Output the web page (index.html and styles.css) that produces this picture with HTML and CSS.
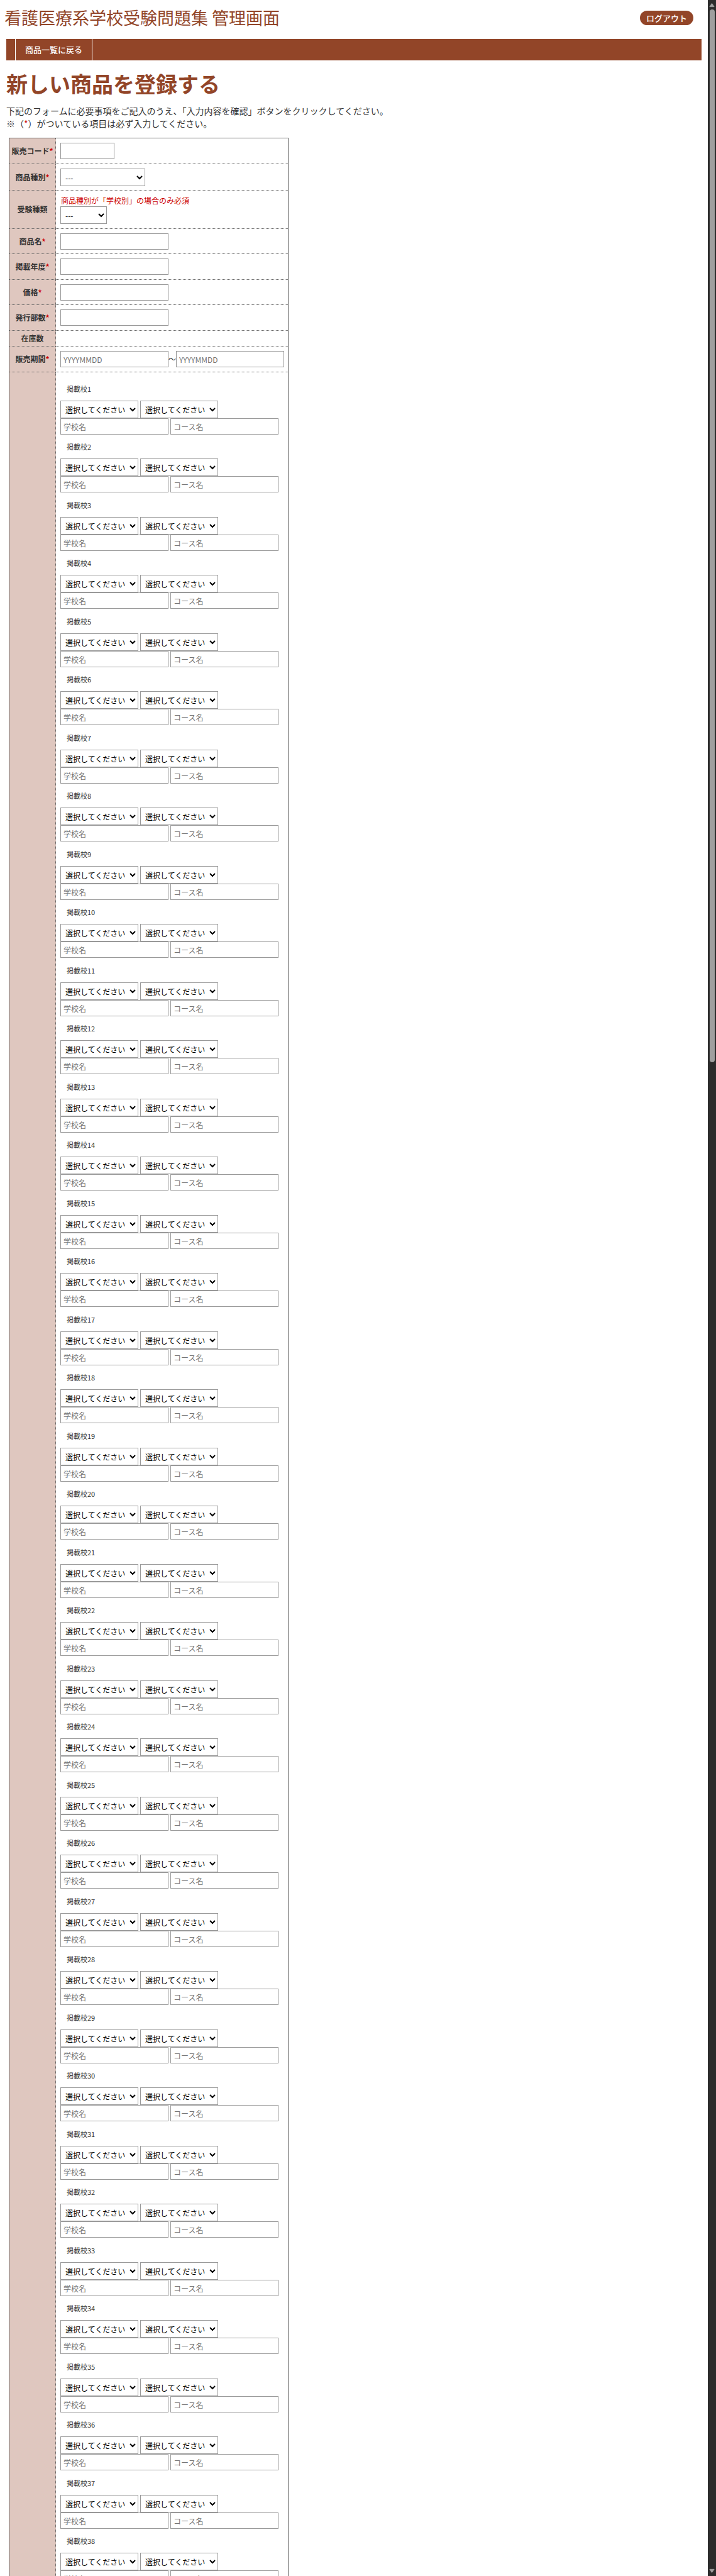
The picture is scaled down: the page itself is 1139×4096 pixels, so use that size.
FILE: index.html
```html
<!DOCTYPE html>
<html lang="ja">
<head>
<meta charset="utf-8">
<meta name="viewport" content="width=device-width, initial-scale=1">
<title>看護医療系学校受験問題集 管理画面</title>
<link rel="stylesheet" href="styles.css">
</head>
<body>
<div class="page">
  <header class="header">
    <p class="site-title">看護医療系学校受験問題集 管理画面</p>
    <button class="logout" type="button">ログアウト</button>
  </header>
  <nav class="nav">
    <a class="nav-link" href="#">商品一覧に戻る</a>
  </nav>
  <main class="main">
    <h1 class="heading">新しい商品を登録する</h1>
    <p class="intro">下記のフォームに必要事項をご記入のうえ、「入力内容を確認」ボタンをクリックしてください。<br>※（<span class="req">*</span>）がついている項目は必ず入力してください。</p>
    <form>
      <table class="form-table">
        <tbody>
          <tr>
            <th scope="row"><label for="code">販売コード<span class="req">*</span></label></th>
            <td><div class="line"><input class="text short" id="code" type="text"></div></td>
          </tr>
          <tr>
            <th scope="row"><label for="kind">商品種別<span class="req">*</span></label></th>
            <td><div class="line"><select class="select wide" id="kind"><option>---</option></select></div></td>
          </tr>
          <tr>
            <th scope="row"><label for="exam">受験種類</label></th>
            <td>
              <p class="note">商品種別が「学校別」の場合のみ必須</p>
              <div class="line"><select class="select narrow" id="exam"><option>---</option></select></div>
            </td>
          </tr>
          <tr>
            <th scope="row"><label for="name">商品名<span class="req">*</span></label></th>
            <td><div class="line"><input class="text" id="name" type="text"></div></td>
          </tr>
          <tr>
            <th scope="row"><label for="year">掲載年度<span class="req">*</span></label></th>
            <td><div class="line"><input class="text" id="year" type="text"></div></td>
          </tr>
          <tr>
            <th scope="row"><label for="price">価格<span class="req">*</span></label></th>
            <td><div class="line"><input class="text" id="price" type="text"></div></td>
          </tr>
          <tr>
            <th scope="row"><label for="copies">発行部数<span class="req">*</span></label></th>
            <td><div class="line"><input class="text" id="copies" type="text"></div></td>
          </tr>
          <tr class="stock">
            <th scope="row">在庫数</th>
            <td></td>
          </tr>
          <tr>
            <th scope="row"><label for="from">販売期間<span class="req">*</span></label></th>
            <td><div class="line period"><input class="text" id="from" type="text" placeholder="YYYYMMDD"><span class="tilde">～</span><input class="text" type="text" placeholder="YYYYMMDD" aria-label="販売期間の終了日"></div></td>
          </tr>
          <tr>
            <th></th>
            <td id="schools"></td>
          </tr>
        </tbody>
      </table>
    </form>
  </main>
</div>
<div class="scrollbar" aria-hidden="true">
  <svg class="arrow" viewBox="0 0 10 8"><path d="M5 1 9 7H1Z" fill="#9f9f9f" stroke="#9f9f9f" stroke-linejoin="round"/></svg>
  <div class="track"><div class="thumb"></div></div>
  <svg class="arrow" viewBox="0 0 10 8"><path d="M5 7 1 1H9Z" fill="#9f9f9f" stroke="#9f9f9f" stroke-linejoin="round"/></svg>
</div>
<script src="schools.js"></script>
</body>
</html>
```
FILE: styles.css
```css
* {
  box-sizing: border-box;
}

body {
  display: flex;
  height: 100vh;
  margin: 0;
  overflow: hidden;
  background: #fff;
  color: #333;
  font-family: "Noto Sans CJK JP", sans-serif;
  font-size: 12px;
  line-height: 18px;
}

p, h1 {
  margin: 0;
}

button, input, select {
  margin: 0;
  font-family: inherit;
  font-size: 12px;
}

.page {
  flex: 1;
  min-width: 0;
  overflow: hidden;
}

.header {
  display: flex;
  justify-content: space-between;
  align-items: center;
  padding: 8px 23px 14px 7px;
}

.site-title {
  color: #924528;
  font-size: 27px;
  line-height: 40px;
}

.logout {
  padding: 0 10px;
  border: 0;
  border-radius: 12px;
  background: #924528;
  color: #fff;
  font-size: 13px;
  font-weight: 500;
  line-height: 23px;
}

.nav {
  display: flex;
  margin: 0 10px;
  padding-left: 14px;
  background: #924528;
}

.nav-link {
  padding: 0 15px;
  border: solid #fff;
  border-width: 0 1px;
  color: #fff;
  font-size: 13px;
  font-weight: 500;
  line-height: 34px;
  text-decoration: none;
}

.main {
  padding: 13px 10px 0;
}

.heading {
  color: #924528;
  font-size: 34px;
  font-weight: 700;
  line-height: 48px;
}

.intro {
  margin: 9px 0 13px;
  font-size: 14px;
  line-height: 20px;
}

.req, .note {
  color: #c00;
}

.form-table {
  margin-left: 4px;
  border: 1px solid #666;
  border-collapse: collapse;
}

.form-table th,
.form-table td {
  padding: 7px 6px 7px 7px;
  border: 1px dotted #666;
  border-width: 1px 0 0;
}

.form-table tr:first-child > * {
  border-top: 1px solid #666;
}

.form-table tr:nth-child(even) > * {
  padding-bottom: 6px;
}

.form-table tr.stock > * {
  padding: 3px;
}

.form-table th {
  width: 74px;
  padding-right: 0;
  padding-left: 0;
  border-right-width: 1px;
  background: #dfc7bf;
  font-weight: 700;
  text-align: center;
  white-space: nowrap;
}

.note {
  padding-left: 1px;
}

.line {
  display: flex;
  gap: 3px;
}

.period {
  gap: 0;
}

.tilde {
  width: 12px;
  line-height: 26px;
}

.text {
  width: 172px;
  height: 26px;
  padding: 0 4px;
  border: 1px solid #999;
}

.text::placeholder {
  color: #757575;
}

.short {
  width: 86px;
}

.select {
  width: 124px;
  height: 28px;
  padding: 0 0 0 3px;
  border: 1px solid #999;
  border-radius: 0;
  background: #fff;
  color: #000;
}

.select.wide {
  width: 135px;
}

.select.narrow {
  width: 74px;
}

.school {
  margin: 0;
  padding: 0;
  border: 0;
}

.school:nth-child(even) {
  margin-bottom: 1px;
}

.school-name {
  padding: 0 10px;
  font-size: 11px;
  line-height: 38px;
}

.scrollbar {
  display: flex;
  flex-direction: column;
  gap: 3px;
  width: 13px;
  padding: 4px 2px;
  background: #2c2c2c;
}

.arrow {
  width: 9px;
  height: 8px;
}

.track {
  flex: 1;
}

.thumb {
  width: 8px;
  height: calc(100% * 7 / 17);
  margin-left: 1px;
  border-radius: 4px;
  background: #9f9f9f;
}
```
FILE: schools.js
```js
const cell = document.getElementById("schools");
const count = 38;

for (let n = 1; n <= count; n++) {
  cell.insertAdjacentHTML("beforeend", `
    <fieldset class="school">
      <legend class="school-name">掲載校${n}</legend>
      <div class="line">
        <select class="select" aria-label="掲載校${n} 都道府県"><option>選択してください</option></select>
        <select class="select" aria-label="掲載校${n} 区分"><option>選択してください</option></select>
      </div>
      <div class="line">
        <input class="text" type="text" placeholder="学校名" aria-label="掲載校${n} 学校名">
        <input class="text" type="text" placeholder="コース名" aria-label="掲載校${n} コース名">
      </div>
    </fieldset>`);
}
```
